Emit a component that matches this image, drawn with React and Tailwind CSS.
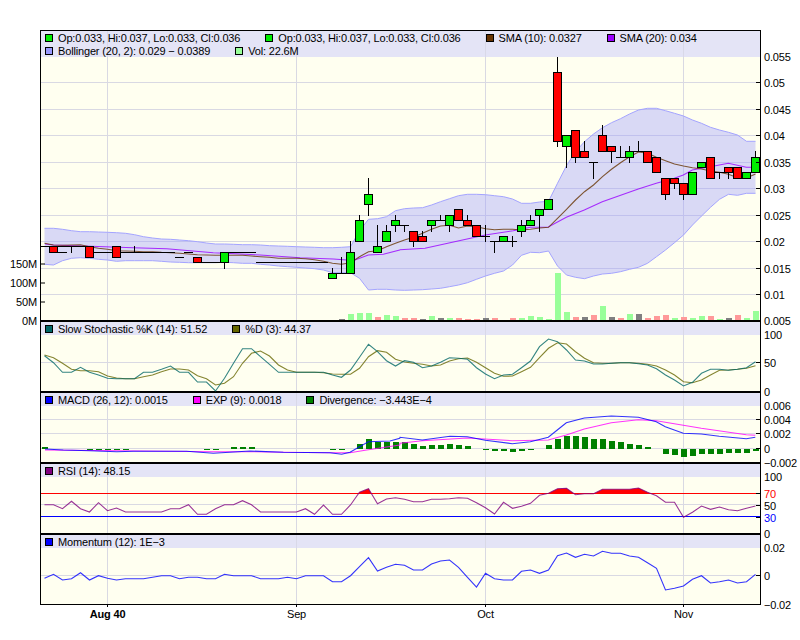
import React from "react";

const GX = [107.5, 296.5, 485.5, 683.5];
const GRID = "#d9d9e3";
const X = (i) => 44.5 + 9 * i;
const main = (z) => 20 + z / 3;
const p320 = (z) => 320 + z / 3;
const p460 = (z) => 460 + z / 3;
const series = (arr, f) => arr.map((z, i) => `${X(i)},${f(z).toFixed(1)}`).join(" ");
const pairs = (arr, f) => arr.map(([x, z]) => `${x.toFixed(1)},${f(z).toFixed(1)}`).join(" ");
const L = (a) => a.map(([x, z]) => [x / 3, z]);
const R = (a) => a.map(([x, z]) => [400 + x / 3, z]);

const yp = (p) => Math.round(56.5 + (55 - p) * 5.29 - 0.5) + 0.5;

const candles = [
  [19,19],[19,18],[19,19],[19,19,19,18],[19,19],[19,17],[18,18],[18,18],[19,17],[18,18],
  [18,18,19,18],[18,18],[18,18],[18,18],[18,18],[17,17],[18,18],[17,16],[16,16],[16,16],
  [16,18,18,15],[18,18],[18,18],[18,18],[16,16],[16,16],[16,16],[16,16],[16,16],[16,16],
  [16,16],[16,16],[13,14,15,13],[14,14,17,14],[14,18,20,14],[20,24,25,20],[27,29,32,25],[18,19,23,18],[20,22,23,20],[23,24,25,22],
  [23,23,23,22],[22,20,22,19],[21,20,22,20],[23,24,24,22],[24,24,25,24],[23,25,25,22],[26,24],[24,23,25,23],[23,21],[21,21,23,20],
  [20,20,20,18],[20,21],[20,20,21,19],[22,23,24,21],[23,24,25,23],[25,26,26,22],[26,28],[52,39,55,38],[38,40,40,34],[41,36,41,35],
  [37,36,39,36],[35,35,35,32],[40,37,42,37],[38,37,38,35],[36,36,38,36],[36,37,38,35],[37,37,39,37],[37,35],[36,33],[32,29,32,28],
  [32,31,32,30],[31,29,31,28],[29,33],[34,35],[36,32],[33,33,33,32],[34,33,34,32],[34,32],[32,33],[33,36,37,33],
];

const upper = [625,625,628,632,635,635,636,637,638,640,644,650,654,657,658,660,662,665,669,672,672,673,674,674,675,677,678,679,680,681,682,683,683,682,680,632,598,596,590,572,566,564,563,555,545,536,527,523,523,524,527,530,537,550,550,546,544,490,437,395,365,342,323,308,296,282,270,265,265,272,280,288,300,310,322,330,337,345,364,364];
const lower = [733,735,722,715,713,715,718,720,724,722,722,722,722,724,726,727,728,728,728,728,727,728,730,730,733,735,738,740,742,744,746,750,758,758,758,775,810,808,808,810,811,810,809,807,805,800,795,788,778,768,760,753,735,706,697,698,693,738,765,772,776,768,762,760,755,748,742,730,710,690,668,645,615,588,562,538,523,526,520,520];
const sma10 = [670,675,676,675,674,680,685,688,692,693,694,695,695,697,698,700,702,704,705,706,706,706,706,708,710,712,715,715,715,716,719,724,730,733,728,710,695,692,680,670,660,652,640,628,618,616,624,618,620,626,629,628,628,630,628,624,622,595,568,540,515,495,470,448,428,410,396,400,412,422,432,438,443,447,453,457,463,473,474,462];
const sma20 = [...L([[135,672],[160,675],[250,678],[400,683],[500,686],[640,698],[780,705],[900,713],[1000,717],[1040,720],[1065,720],[1105,705],[1150,703],[1199,690]]), ...R([[0,689],[75,685],[150,668],[256,645],[340,632],[391,622],[445,621],[499,592],[553,570],[607,545],[715,507],[769,490],[823,475],[850,465],[877,450],[931,440],[985,430],[1039,442],[1066,442]])];

const volColor = { g: "#99ff99", r: "#ff9999", k: "#808080" };
const volumes = [[33,"k",897],[34,"g",882],[35,"g",879],[36,"g",879],[37,"r",891],[38,"g",885],[39,"g",888],[40,"r",894],[41,"r",894],[42,"k",897],[43,"g",888],[44,"k",894],[45,"g",894],[46,"r",894],[47,"r",897],[48,"r",897],[49,"k",894],[50,"r",894],[52,"r",894],[53,"g",894],[54,"g",888],[55,"g",891],[56,"g",897],[57,"g",759],[58,"g",876],[59,"r",891],[60,"k",891],[61,"r",885],[62,"g",858],[63,"k",891],[64,"r",894],[65,"g",882],[66,"k",882],[67,"r",894],[68,"r",888],[69,"r",885],[70,"g",894],[71,"r",891],[72,"g",894],[73,"g",888],[74,"r",888],[75,"g",897],[76,"k",894],[77,"r",885],[78,"g",894],[79,"g",873]];

const stochK = [107,128,157,157,142,157,165,175,176,176,176,157,157,148,138,157,157,186,186,213,175,130,86,86,110,133,157,157,157,157,157,157,165,172,150,112,73,95,122,138,122,127,143,138,127,113,115,118,143,162,176,165,163,143,123,80,57,65,90,120,123,132,132,130,128,128,131,135,146,165,180,198,187,160,148,148,151,148,143,125];
const stochD = [105,113,130,148,152,152,155,168,174,176,176,170,165,155,147,147,150,167,176,195,190,170,130,100,93,108,135,150,157,157,157,158,162,163,163,145,110,92,97,118,126,130,133,138,135,123,116,114,127,143,160,169,168,155,142,113,85,68,72,95,115,128,130,130,128,128,130,133,138,150,165,185,188,180,165,151,150,148,145,137];

const macd = [...L([[135,387],[190,390],[270,392],[350,395],[400,394],[560,394],[640,400],[750,393],[850,397],[990,398],[1025,403],[1050,397],[1105,365],[1170,363],[1199,355]]), ...R([[0,352],[67,360],[150,349],[202,350],[256,361],[337,371],[391,365],[445,352],[472,330],[499,308],[553,294],[634,288],[715,292],[769,305],[796,320],[850,340],[904,342],[958,349],[1039,356],[1066,352]])];
const exp9 = [...L([[135,390],[350,392],[640,395],[750,395],[850,397],[990,398],[1050,398],[1100,390],[1199,375]]), ...R([[0,370],[67,362],[202,354],[337,362],[445,360],[499,345],[553,327],[634,308],[715,299],[769,302],[850,316],[904,325],[1039,344],[1066,346]])];
const divergence = [[0,382],[5,391],[6,391],[7,391],[8,391],[9,391],[18,390],[19,390],[21,381],[22,381],[23,381],[32,390],[33,390],[35,372],[36,357],[37,365],[38,367],[39,365],[40,367],[41,372],[42,378],[43,375],[44,375],[45,372],[46,376],[47,379],[49,390],[50,392],[51,392],[52,395],[53,393],[54,391],[55,388],[56,376],[57,357],[58,347],[59,349],[60,352],[61,357],[62,357],[63,364],[64,367],[65,373],[66,376],[67,382],[68,388],[69,402],[70,405],[71,411],[72,408],[73,402],[74,402],[75,402],[76,399],[77,399],[78,399],[79,393]];

const rsi = [134,134,146,124,146,156,128,152,144,156,156,156,156,156,146,146,134,163,163,146,134,134,122,134,156,156,156,156,156,146,163,135,163,163,135,97,86,131,117,113,118,125,125,118,118,116,113,115,128,143,162,127,145,139,130,106,100,86,85,104,101,101,88,88,88,88,84,97,107,127,127,172,157,138,148,141,149,152,145,138];
const momentum = [355,343,360,356,338,360,347,355,360,356,356,356,352,347,347,356,352,352,356,356,343,347,347,347,356,356,356,352,356,347,347,347,365,365,347,320,293,333,322,313,316,330,330,312,303,300,322,352,381,340,356,360,360,334,330,340,330,287,279,292,283,288,274,280,280,288,292,308,325,390,385,378,358,347,369,365,360,369,365,343];

const bandPts = `${series(upper, main)} ${series(lower, main).split(" ").reverse().join(" ")}`;

function LegendItem({ color, label }) {
  return (
    <span className="flex items-start gap-[5px] whitespace-nowrap leading-[13px]">
      <span className="w-[8px] h-[8px] mt-[3px] border border-black shrink-0" style={{ backgroundColor: color }} />
      <span className="pt-px">{label}</span>
    </span>
  );
}

function GridOverlay() {
  return (
    <>
      <span className="absolute top-0 bottom-0 left-[66px] w-px bg-[#d9d9e8]" />
      <span className="absolute top-0 bottom-0 left-[255px] w-px bg-[#d9d9e8]" />
      <span className="absolute top-0 bottom-0 left-[444px] w-px bg-[#d9d9e8]" />
      <span className="absolute top-0 bottom-0 left-[642px] w-px bg-[#d9d9e8]" />
    </>
  );
}

function Legend({ rows }) {
  return (
    <div className="relative bg-[#e4e4f6] pl-[4px] text-[11px] tracking-[-0.16px] text-black">
      <GridOverlay />
      {rows.map((row, r) => (
        <div key={r} className="relative flex gap-[25px] h-[13px] items-start">
          {row.map(([color, label]) => (
            <LegendItem key={label} color={color} label={label} />
          ))}
        </div>
      ))}
    </div>
  );
}

function Plot({ y0, h, hGrid = [], ticks = [], left = [], children, bottom }) {
  return (
    <svg
      width="719"
      height={h}
      viewBox={`41 ${y0} 719 ${h}`}
      className="block overflow-visible bg-[#fffff0] text-[11px] tracking-[-0.16px]"
    >
      {hGrid.map((y) => (
        <line key={y} x1="41" x2="760" y1={y} y2={y} stroke={GRID} />
      ))}
      {GX.map((x) => (
        <line key={x} x1={x} x2={x} y1={y0} y2={y0 + h} stroke={GRID} />
      ))}
      {children}
      {ticks.map(([y, label, color]) => (
        <g key={label}>
          <line x1="756" x2="760" y1={y} y2={y} stroke="#000" />
          <text x="764" y={y + 4} fill={color || "#000"}>
            {label}
          </text>
        </g>
      ))}
      {left.map(([y, label]) => (
        <g key={label}>
          <line x1="41" x2="45" y1={y} y2={y} stroke="#000" />
          <text x="37" y={y + 4} textAnchor="end" fill="#000">
            {label}
          </text>
        </g>
      ))}
      {bottom}
    </svg>
  );
}

function Candle({ i, c }) {
  const [o, cl, hi = Math.max(c[0], c[1]), lo = Math.min(c[0], c[1])] = c;
  const x = X(i);
  const top = yp(Math.max(o, cl));
  const bot = yp(Math.min(o, cl));
  return (
    <g shapeRendering="crispEdges">
      <line x1={x} x2={x} y1={yp(hi) - 0.5} y2={yp(lo) + 0.5} stroke="#000" />
      {o === cl ? (
        <line x1={x - 4.5} x2={x + 4.5} y1={top} y2={top} stroke="#000" />
      ) : (
        <rect x={x - 4} y={top} width="8" height={bot - top} fill={o > cl ? "#ff0000" : "#00ee00"} stroke="#000" />
      )}
    </g>
  );
}

function Line({ points, color }) {
  return <polyline points={points} fill="none" stroke={color} strokeWidth="1.1" strokeOpacity="0.8" />;
}

export default function App() {
  return (
    <div className="w-[800px] h-[640px] bg-white pt-[30px] pl-[40px] font-['Liberation_Sans',Arial,sans-serif] overflow-hidden">
      <div className="w-[721px] border-x border-black border-t border-t-black">
        <div className="border-b-2 border-black">
          <Legend
            rows={[
              [
                ["#00ee00", "Op:0.033, Hi:0.037, Lo:0.033, Cl:0.036"],
                ["#00ee00", "Op:0.033, Hi:0.037, Lo:0.033, Cl:0.036 "],
                ["#663300", "SMA (10): 0.0327"],
                ["#9900ff", "SMA (20): 0.034"],
              ],
              [
                ["#9999ff", "Bollinger (20, 2): 0.029 − 0.0389"],
                ["#99ff99", "Vol: 22.6M"],
              ],
            ]}
          />
          <Plot
            y0={57}
            h={263}
            hGrid={[82.5, 109.5, 135.5, 162.5, 188.5, 215.5, 241.5, 268.5, 294.5]}
            ticks={[[56.5,"0.055"],[82.5,"0.05"],[109.5,"0.045"],[135.5,"0.04"],[162.5,"0.035"],[188.5,"0.03"],[215.5,"0.025"],[241.5,"0.02"],[268.5,"0.015"],[294.5,"0.01"],[320.5,"0.005"]]}
            left={[[264,"150M"],[283,"100M"],[302,"50M"],[320.5,"0M"]]}
          >
            <polygon points={bandPts} fill="#9999ff" fillOpacity="0.37" />
            <polyline points={series(upper, main)} fill="none" stroke="#a4a4ff" />
            <polyline points={series(lower, main)} fill="none" stroke="#a4a4ff" />
            <g shapeRendering="crispEdges">
              {volumes.map(([i, k, z]) => (
                <rect key={i} x={X(i) - 3} y={main(z)} width="6" height={320 - main(z)} fill={volColor[k]} />
              ))}
            </g>
            <Line points={pairs(sma20, main)} color="#9900ff" />
            <Line points={series(sma10, main)} color="#663300" />
            {candles.map((c, i) => (
              <Candle key={i} i={i} c={c} />
            ))}
            <line x1={X(2) - 4.5} x2={X(2) + 4.5} y1={yp(18)} y2={yp(18)} stroke="#000" shapeRendering="crispEdges" />
          </Plot>
        </div>

        <div className="border-b-2 border-black">
          <Legend rows={[[["#006666", "Slow Stochastic %K (14): 51.52"], ["#666600", "%D (3): 44.37"]]]} />
          <Plot
            y0={335}
            h={56}
            hGrid={[362.5]}
            ticks={[[334.5,"100"],[362.5,"50"],[391.5,"0"]]}
          >
            <Line points={series(stochD, p320)} color="#666600" />
            <Line points={series(stochK, p320)} color="#006666" />
          </Plot>
        </div>

        <div className="border-b-2 border-black">
          <Legend rows={[[["#0000ff", "MACD (26, 12): 0.0015"], ["#ff00ff", "EXP (9): 0.0018"], ["#008000", "Divergence: −3.443E−4"]]]} />
          <Plot
            y0={406}
            h={56}
            hGrid={[419.5, 433.5, 448.5]}
            ticks={[[405.5,"0.006"],[419.5,"0.004"],[433.5,"0.002"],[448.5,"0"],[462.5,"−0.002"]]}
          >
            <g shapeRendering="crispEdges">
              {divergence.map(([i, z]) => {
                const y = p320(z);
                const base = 448.5;
                return (
                  <rect key={i} x={X(i) - 3} y={Math.min(y, base)} width="6" height={Math.abs(y - base)} fill="#008000" />
                );
              })}
            </g>
            <Line points={pairs(exp9, p320)} color="#ff00ff" />
            <Line points={pairs(macd, p320)} color="#0000ff" />
          </Plot>
        </div>

        <div className="border-b-2 border-black">
          <Legend rows={[[["#800080", "RSI (14): 48.15"]]]} />
          <Plot
            y0={477}
            h={56}
            hGrid={[504.5]}
            ticks={[[476.5,"100"],[493.5,"70","#ff0000"],[505.5,"50"],[517.5,"30","#0000ff"],[533.5,"0"]]}
          >
            <clipPath id="over70">
              <rect x="41" y="477" width="719" height="16.5" />
            </clipPath>
            <polygon
              points={`${series(rsi, p460)} ${X(79)},530 ${X(0)},530`}
              fill="#ff0000"
              clipPath="url(#over70)"
            />
            <line x1="41" x2="760" y1="493.5" y2="493.5" stroke="#ff0000" />
            <line x1="41" x2="760" y1="516.5" y2="516.5" stroke="#0000ff" />
            <Line points={series(rsi, p460)} color="#800080" />
          </Plot>
        </div>

        <div className="border-b border-black">
          <Legend rows={[[["#0000ff", "Momentum (12): 1E−3"]]]} />
          <Plot
            y0={548}
            h={56}
            hGrid={[575.5]}
            ticks={[[547.5,"0.02"],[575.5,"0"],[604.5,"−0.02"]]}
            bottom={
              <>
                {GX.map((x) => (
                  <line key={x} x1={x} x2={x} y1="605" y2="607" stroke="#000" />
                ))}
                <text x="107.5" y="618" textAnchor="middle" fontWeight="700" fill="#000">Aug 40</text>
                <text x="296.5" y="618" textAnchor="middle" fill="#000">Sep</text>
                <text x="485.5" y="618" textAnchor="middle" fill="#000">Oct</text>
                <text x="683.5" y="618" textAnchor="middle" fill="#000">Nov</text>
              </>
            }
          >
            <Line points={series(momentum, p460)} color="#0000ff" />
          </Plot>
        </div>
      </div>
    </div>
  );
}
